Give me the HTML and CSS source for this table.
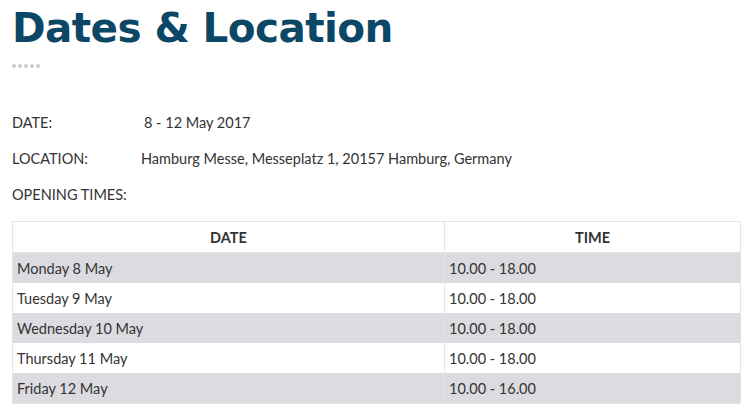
FILE: index.html
```html
<!DOCTYPE html>
<html lang="en">
<head>
  <meta charset="UTF-8" />
  <title>Dates &amp; Location</title>
  <link rel="stylesheet" href="styles.css">
</head>
<body>
  <div class="section">
    <h1 class="section-title">Dates &amp; Location</h1>
    <div class="dots"><span></span><span></span><span></span><span></span><span></span></div>

    <div class="info-row info-first">
      <span class="info-label">DATE:</span>
      <span class="info-value info-date">8 - 12 May 2017</span>
    </div>
    <div class="info-row">
      <span class="info-label">LOCATION:</span>
      <span class="info-value">Hamburg Messe, Messeplatz 1, 20157 Hamburg, Germany</span>
    </div>
    <div class="info-row">
      <span class="info-label">OPENING TIMES:</span>
    </div>

    <table class="times-table">
      <thead>
        <tr>
          <th class="col-date">DATE</th>
          <th class="col-time">TIME</th>
        </tr>
      </thead>
      <tbody>
        <tr><td>Monday 8 May</td><td>10.00 - 18.00</td></tr>
        <tr><td>Tuesday 9 May</td><td>10.00 - 18.00</td></tr>
        <tr><td>Wednesday 10 May</td><td>10.00 - 18.00</td></tr>
        <tr><td>Thursday 11 May</td><td>10.00 - 18.00</td></tr>
        <tr><td>Friday 12 May</td><td>10.00 - 16.00</td></tr>
      </tbody>
    </table>
  </div>
</body>
</html>
```

FILE: styles.css
```css
body {
  margin: 0;
  padding: 0 9px 0 12px;
  font-family: 'Lato', sans-serif;
  color: #333;
  background: #fff;
}

.section-title {
  margin: 0;
  padding-top: 4px;
  font-family: 'DejaVu Sans', sans-serif;
  font-weight: bold;
  font-size: 40.5px;
  line-height: 48px;
  letter-spacing: -0.6px;
  color: #0c4766;
}

.dots {
  display: flex;
  gap: 2px;
  margin-top: 12px;
  height: 4px;
}

.dots span {
  width: 4px;
  height: 4px;
  border-radius: 50%;
  background: #c9c9d2;
}

.info-row {
  display: flex;
  font-size: 14.5px;
  line-height: 18px;
  margin-top: 18px;
}

.info-first {
  margin-top: 46px;
}

.info-label {
  width: 129px;
}

.info-date {
  padding-left: 3px;
}

.times-table {
  width: 729px;
  margin-top: 17px;
  border-collapse: collapse;
  font-size: 14.5px;
  border: 1px solid #e4e4e8;
}

.times-table th,
.times-table td {
  height: 30px;
  padding: 0 4px;
  text-align: left;
  border-left: 1px solid #e4e4e8;
}

.times-table th {
  text-align: center;
  font-weight: bold;
  color: #333;
  border-bottom: 1px solid #e4e4e8;
}

.col-date {
  width: 423px;
}

.times-table tbody tr:nth-child(odd) {
  background: #dcdbe0;
}
```
